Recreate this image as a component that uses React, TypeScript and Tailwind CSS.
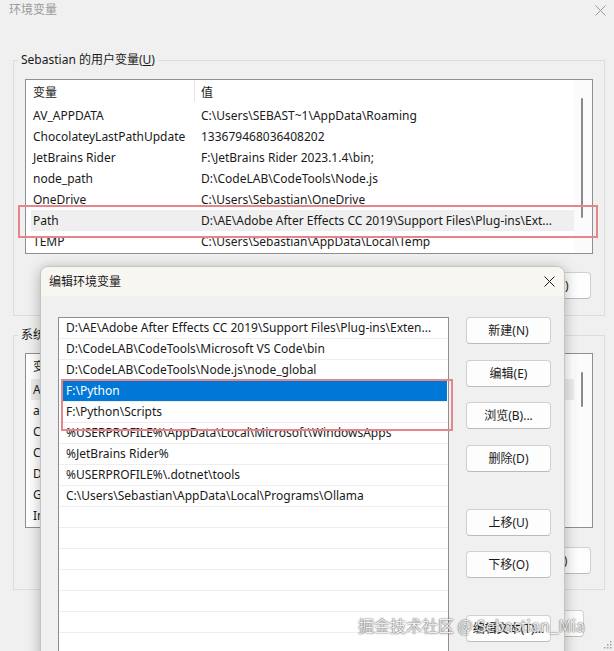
import { memo } from 'react'

const userVars: [string, string][] = [
  ['AV_APPDATA', 'C:\\Users\\SEBAST~1\\AppData\\Roaming'],
  ['ChocolateyLastPathUpdate', '133679468036408202'],
  ['JetBrains Rider', 'F:\\JetBrains Rider 2023.1.4\\bin;'],
  ['node_path', 'D:\\CodeLAB\\CodeTools\\Node.js'],
  ['OneDrive', 'C:\\Users\\Sebastian\\OneDrive'],
  ['Path', 'D:\\AE\\Adobe After Effects CC 2019\\Support Files\\Plug-ins\\Ext...'],
  ['TEMP', 'C:\\Users\\Sebastian\\AppData\\Local\\Temp'],
]

const systemVars: [string, string][] = [
  ['ACSvcPort', '17532'],
  ['asl.log', 'Destination=file'],
  ['ChocolateyInstall', 'C:\\ProgramData\\chocolatey'],
  ['ComSpec', 'C:\\Windows\\system32\\cmd.exe'],
  ['DriverData', 'C:\\Windows\\System32\\Drivers\\DriverData'],
  ['GOPATH', 'D:\\Go'],
  ['IntelliJ IDEA', 'F:\\IntelliJ IDEA\\bin;'],
]

const pathEntries = [
  'D:\\AE\\Adobe After Effects CC 2019\\Support Files\\Plug-ins\\Exten...',
  'D:\\CodeLAB\\CodeTools\\Microsoft VS Code\\bin',
  'D:\\CodeLAB\\CodeTools\\Node.js\\node_global',
  'F:\\Python',
  'F:\\Python\\Scripts',
  '%USERPROFILE%\\AppData\\Local\\Microsoft\\WindowsApps',
  '%JetBrains Rider%',
  '%USERPROFILE%\\.dotnet\\tools',
  'C:\\Users\\Sebastian\\AppData\\Local\\Programs\\Ollama',
  '',
  '',
  '',
  '',
  '',
  '',
  '',
]

function CloseIcon({ color }: { color: string }) {
  return (
    <svg width="11" height="11" viewBox="0 0 11 11" fill="none">
      <path d="M0.5 0.5L10.5 10.5M10.5 0.5L0.5 10.5" stroke={color} strokeWidth="1" />
    </svg>
  )
}

function WinButton({ label, className = '' }: { label: string; className?: string }) {
  return (
    <div
      className={`flex h-[27px] w-[85px] items-center justify-center rounded-[4px] border border-[#d0d0d0] border-b-[#bcbcbc] bg-[#fdfdfd] text-[12px] text-[#1b1b1b] ${className}`}
    >
      {label}
    </div>
  )
}

function VarList({ rows, thumbTop, thumbHeight }: { rows: [string, string][]; thumbTop: number; thumbHeight: number }) {
  return (
    <div className="flex h-[175px] border border-[#8f8f8f] bg-white">
      <div className="flex min-w-0 flex-1 flex-col pl-[5px]">
        <div className="flex h-[25px] items-center">
          <div className="w-[163px] pl-[2px]">变量</div>
          <div className="h-[22px] w-px self-start bg-[#e5e5e5]" />
          <div className="pl-[6px]">值</div>
        </div>
        {rows.map(([name, value], i) => (
          <div
            key={name}
            className={`flex h-[21px] items-center whitespace-nowrap ${i === 0 && rows === systemVars ? 'bg-[#ededed]' : ''} ${name === 'Path' ? 'bg-[#efefef]' : ''}`}
          >
            <div className="w-[163px] overflow-hidden pl-[2px]">{name}</div>
            <div className="overflow-hidden pl-[7px]">{value}</div>
          </div>
        ))}
      </div>
      <div className="relative w-[18px] bg-[#fbfbfb]">
        <div
          className="absolute left-[7px] w-[2px] rounded-full bg-[#8a8a8a]"
          style={{ top: thumbTop, height: thumbHeight }}
        />
      </div>
    </div>
  )
}

function EditDialog() {
  return (
    <div className="absolute left-[40px] top-[266px] flex h-[420px] w-[525px] flex-col overflow-hidden rounded-t-[8px] border border-[#c4c4c4] bg-[#f0f0f0] shadow-[0_2px_14px_rgba(0,0,0,0.28)]">
      <div className="flex h-[29px] shrink-0 items-center justify-between bg-[#f8f6f1] pl-[8px] pr-[9px]">
        <span className="text-[12px] text-[#1a1a1a]">编辑环境变量</span>
        <CloseIcon color="#1a1a1a" />
      </div>
      <div className="flex flex-1 pl-[17px] pt-[21px]">
        <div className="h-[400px] w-[391px] border border-[#8f8f8f] bg-white">
          {pathEntries.map((entry, i) => (
            <div key={i} className="h-[21px] border-b border-[#eeeeee]">
              <div
                className={`ml-[3px] mr-px flex h-[20px] items-center whitespace-nowrap pl-[4px] ${entry === 'F:\\Python' ? 'bg-[#0078d7] text-white' : ''}`}
              >
                {entry}
              </div>
            </div>
          ))}
        </div>
        <div className="ml-[17px] flex flex-col">
          <WinButton label="新建(N)" />
          <WinButton label="编辑(E)" className="mt-[16px]" />
          <WinButton label="浏览(B)..." className="mt-[15px]" />
          <WinButton label="删除(D)" className="mt-[16px]" />
          <WinButton label="上移(U)" className="mt-[37px]" />
          <WinButton label="下移(O)" className="mt-[15px]" />
          <WinButton label="编辑文本(T)..." className="mt-[37px]" />
        </div>
      </div>
    </div>
  )
}

function App() {
  return (
    <div className="relative h-[651px] w-[614px] overflow-hidden bg-[#f0f0f0] font-['Noto_Sans','Noto_Sans_CJK_SC',sans-serif] text-[12px] text-[#1a1a1a]">
      <div className="flex h-[20px] items-center justify-between pl-[9px] pr-[8px]">
        <span className="text-[12px] text-[#9b9b9b]">环境变量</span>
        <CloseIcon color="#9b9b9b" />
      </div>

      <fieldset className="ml-[13px] mr-[9px] mt-[31px] border border-[#dcdcdc] px-[11px] pb-[16px] pt-[10px]">
        <legend className="-ml-[7px] px-[3px] leading-[18px]">
          Sebastian 的用户变量(<span className="underline">U</span>)
        </legend>
        <VarList rows={userVars} thumbTop={18} thumbHeight={120} />
        <div className="mr-[2px] mt-[18px] flex justify-end gap-[8px]">
          <WinButton label="新建(N)..." className="h-[26px]" />
          <WinButton label="编辑(E)..." className="h-[26px]" />
          <WinButton label="删除(D)" className="h-[26px]" />
        </div>
      </fieldset>

      <fieldset className="ml-[13px] mr-[9px] mt-[10px] border border-[#dcdcdc] px-[11px] pb-[15px] pt-[9px]">
        <legend className="-ml-[7px] px-[3px] leading-[18px]">
          系统变量(<span className="underline">S</span>)
        </legend>
        <VarList rows={systemVars} thumbTop={18} thumbHeight={35} />
        <div className="mr-[2px] mt-[19px] flex justify-end gap-[8px]">
          <WinButton label="新建(W)..." className="h-[26px]" />
          <WinButton label="编辑(I)..." className="h-[26px]" />
          <WinButton label="删除(L)" className="h-[26px]" />
        </div>
      </fieldset>

      <div className="mt-[20px] flex justify-end gap-[8px] pr-[30px]">
        <WinButton label="确定" />
        <WinButton label="取消" />
      </div>

      <EditDialog />

      <div className="pointer-events-none absolute left-[18px] top-[205px] h-[33px] w-[580px] border-2 border-[#e5868b]" />
      <div className="pointer-events-none absolute left-[61px] top-[379px] h-[52px] w-[392px] border-2 border-[#e5868b]" />

      <div className="pointer-events-none absolute left-[358px] top-[614px] font-['Noto_Sans_CJK_SC',sans-serif] text-[16px] leading-[22px] text-white/90 [text-shadow:0_0_2px_rgba(0,0,0,0.55),0_0_1px_rgba(0,0,0,0.6)]">
        掘金技术社区 @ Sebastian_Mia
      </div>

      <svg className="absolute bottom-[2px] right-[2px]" width="10" height="10" viewBox="0 0 10 10">
        <rect x="8" y="2" width="1.5" height="1.5" fill="#a0a0a0" />
        <rect x="5" y="5" width="1.5" height="1.5" fill="#a0a0a0" />
        <rect x="8" y="5" width="1.5" height="1.5" fill="#a0a0a0" />
        <rect x="2" y="8" width="1.5" height="1.5" fill="#a0a0a0" />
        <rect x="5" y="8" width="1.5" height="1.5" fill="#a0a0a0" />
        <rect x="8" y="8" width="1.5" height="1.5" fill="#a0a0a0" />
      </svg>
    </div>
  )
}

export default memo(App)
